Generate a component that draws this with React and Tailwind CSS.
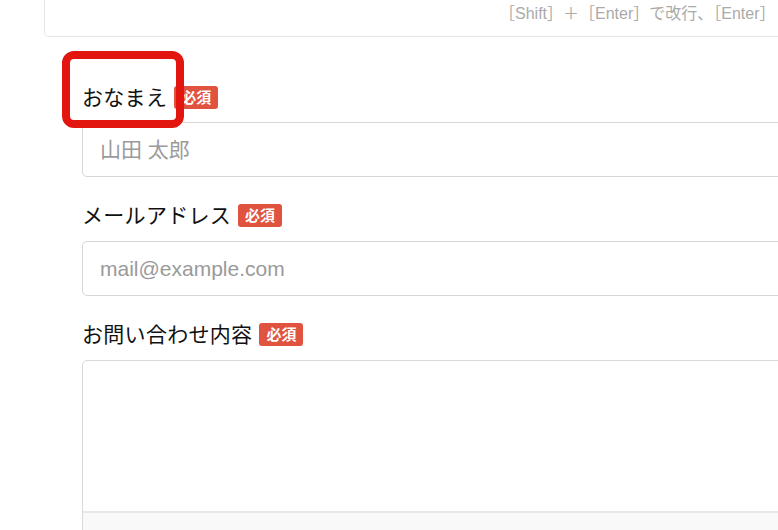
const Badge = () => (
  <span className="ml-[7px] inline-flex h-[23px] items-center rounded-[3px] bg-[#e0533f] px-[7px] text-[15px] font-bold leading-none text-white">
    必須
  </span>
);

const Label = ({ children }) => (
  <div className="flex h-[23px] items-center">
    <span className="text-[21px] leading-none tracking-[0.3px] text-[#111111]">{children}</span>
    <Badge />
  </div>
);

export default function App() {
  return (
    <div className="relative h-[530px] w-[778px] overflow-hidden bg-white font-['Liberation_Sans','Noto_Sans_CJK_JP',sans-serif]">
      {/* chat input card, cut off at top */}
      <div className="ml-[44px] flex h-[37px] w-[900px] items-start rounded-b-[5px] border border-t-0 border-[#e6e6e6]">
        <p className="ml-[454px] mt-[6px] whitespace-nowrap text-[16px] leading-none text-[#aaaaaa]">
          ［Shift］＋［Enter］で改行、［Enter］
        </p>
      </div>

      <form className="ml-[82px] mt-[49px] flex w-[900px] flex-col">
        <Label>おなまえ</Label>
        <input
          type="text"
          placeholder="山田 太郎"
          className="mt-[13px] h-[55px] rounded-[5px] border border-[#d6d6d6] px-[17px] text-[21px] placeholder:text-[#9a9a9a] focus:outline-none"
        />

        <div className="mt-[27px]">
          <Label>メールアドレス</Label>
        </div>
        <input
          type="email"
          placeholder="mail@example.com"
          className="mt-[14px] h-[55px] rounded-[5px] border border-[#d6d6d6] px-[17px] text-[21px] placeholder:text-[#9a9a9a] focus:outline-none"
        />

        <div className="mt-[27px]">
          <Label>お問い合わせ内容</Label>
        </div>
        <div className="mt-[14px] overflow-hidden rounded-[5px] border border-[#d9d9d9]">
          <textarea className="block h-[150px] w-full resize-none px-[17px] py-[12px] text-[21px] focus:outline-none"></textarea>
          <div className="h-[60px] border-t-2 border-[#e8e8e8] bg-[#f9f9f9]"></div>
        </div>
      </form>

      {/* highlight */}
      <div className="pointer-events-none absolute left-[62px] top-[51px] h-[77px] w-[122px] rounded-[12px] border-[8px] border-[#e3150f]"></div>
    </div>
  );
}
